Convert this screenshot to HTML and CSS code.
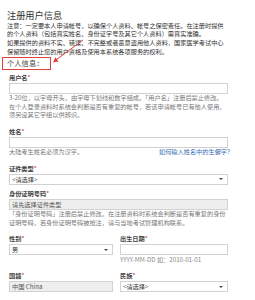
FILE: index.html
```html
<!DOCTYPE html>
<html lang="zh-CN">
<head>
<meta charset="utf-8">
<title>注册用户信息</title>
<link rel="stylesheet" href="styles.css">
</head>
<body>
<div class="page">
  <h1 class="title">注册用户信息</h1>
  <div class="notice">
    <p>注意：一定要本人申请帐号，以确保个人资料、帐号之保密责任。在注册时提供</p>
    <p>的个人资料（包括真实姓名、身份证字号及其它个人资料）需真实准确。</p>
    <p>如果提供的资料不实、错误、不完整或者恶意盗用他人资料，国家医学考试中心</p>
    <p>保留随时终止您的用户资格及使用本系统各项服务的权利。</p>
  </div>
  <div class="section-head"><span class="section-box">个人信息：</span></div>
  <svg class="arrow" width="255" height="80" viewBox="0 0 255 80">
    <line x1="83" y1="40" x2="56" y2="60" stroke="#e2413b" stroke-width="1"/>
    <polygon points="53,62.5 58.6,61.4 55.4,57.3" fill="#e2413b"/>
  </svg>
  <form class="form">
    <div class="field">
      <label class="label">用户名<span class="req">*</span></label>
      <input class="control" type="text">
      <p class="help">3-20位，以字母开头，由字母下划线和数字组成。「用户名」注册后禁止修改。<br>在个人登录资料时系统会判断是否有重复的帐号，若该申请帐号已有他人使用，<br>须另设其它字组以供辨识。</p>
    </div>
    <div class="field">
      <label class="label">姓名<span class="req">*</span></label>
      <input class="control" type="text">
      <div class="help help-row"><span>大陆考生姓名必须为汉字。</span><a class="link" href="#">如何输入姓名中的生僻字?</a></div>
    </div>
    <div class="field">
      <label class="label">证件类型<span class="req">*</span></label>
      <div class="select"><select class="control"><option>&lt;请选择&gt;</option></select></div>
    </div>
    <div class="field">
      <label class="label">身份证明号码<span class="req">*</span></label>
      <input class="control disabled" type="text" value="请先选择证件类型" disabled>
      <p class="help">「身份证明号码」注册后禁止修改。在注册资料时系统会判断是否有重复的身份<br>证明号码，若身份证明号码被抢注，请与当地考试管理机构联系。</p>
    </div>
    <div class="row">
      <div class="field">
        <label class="label">性别<span class="req">*</span></label>
        <div class="select"><select class="control"><option>男</option></select></div>
      </div>
      <div class="field">
        <label class="label">出生日期<span class="req">*</span></label>
        <input class="control" type="text">
        <p class="help help-light">YYYY-MM-DD 如：2010-01-01</p>
      </div>
    </div>
    <div class="row">
      <div class="field">
        <label class="label">国籍<span class="req">*</span></label>
        <input class="control disabled" type="text" value="中国 China" disabled>
      </div>
      <div class="field">
        <label class="label">民族<span class="req">*</span></label>
        <div class="select"><select class="control"><option>&lt;请选择&gt;</option></select></div>
      </div>
    </div>
  </form>
</div>
</body>
</html>
```

FILE: styles.css
```css
* {
  box-sizing: border-box;
  margin: 0;
  padding: 0;
}

body {
  margin: 0;
  background: #fff;
  font-family: "Noto Sans CJK SC", "Noto Sans", sans-serif;
  color: #333;
  width: 255px;
  height: 300px;
  overflow: hidden;
}

.page {
  position: relative;
  padding-top: 8.5px;
}

.title {
  font-size: 9.2px;
  font-weight: normal;
  line-height: 12.5px;
  margin-left: 7px;
  color: #333;
}

.notice {
  margin: 0.5px 0 0 7px;
  font-size: 6.2px;
  line-height: 8.8px;
  color: #333;
  white-space: nowrap;
}

.section-head {
  line-height: 0;
}

.section-box {
  display: inline-block;
  margin-left: 2px;
  border: 1px solid #e2413b;
  padding: 0 7px 0 4px;
  font-size: 7.3px;
  line-height: 11px;
  color: #444;
}

.arrow {
  position: absolute;
  left: 0;
  top: 0;
}

.form {
  display: flex;
  flex-direction: column;
  gap: 5px;
  margin: 4px 0 0 9px;
  width: 219px;
}

.field {
  display: flex;
  flex-direction: column;
}

.label {
  display: block;
  font-size: 6.2px;
  line-height: 8px;
  font-weight: bold;
  color: #444;
  margin-bottom: 1px;
}

.req {
  color: #e02020;
  font-weight: normal;
}

.control {
  display: block;
  width: 100%;
  height: 11px;
  border: 1px solid #d2d2d2;
  background: #fff;
  font-family: inherit;
  font-size: 6.2px;
  color: #333;
  padding: 0 2px;
  outline: none;
  border-radius: 0;
  -webkit-appearance: none;
  appearance: none;
}

.control.disabled {
  background: #eee;
  color: #555;
  -webkit-text-fill-color: #555;
  opacity: 1;
}

.select {
  position: relative;
}

.select::after {
  content: "";
  position: absolute;
  right: 5px;
  top: 4.5px;
  border-left: 2px solid transparent;
  border-right: 2px solid transparent;
  border-top: 2.5px solid #444;
}

.help {
  font-size: 6.2px;
  line-height: 8.5px;
  color: #777;
  white-space: nowrap;
  margin-top: 0.5px;
  margin-bottom: 3px;
}

.help-row {
  display: flex;
  justify-content: space-between;
}

.help-light {
  color: #888;
}

.link {
  color: #3a6db3;
  text-decoration: none;
  margin-right: -2px;
}

.row {
  display: grid;
  grid-template-columns: 104px 108px;
  column-gap: 7px;
}
```
